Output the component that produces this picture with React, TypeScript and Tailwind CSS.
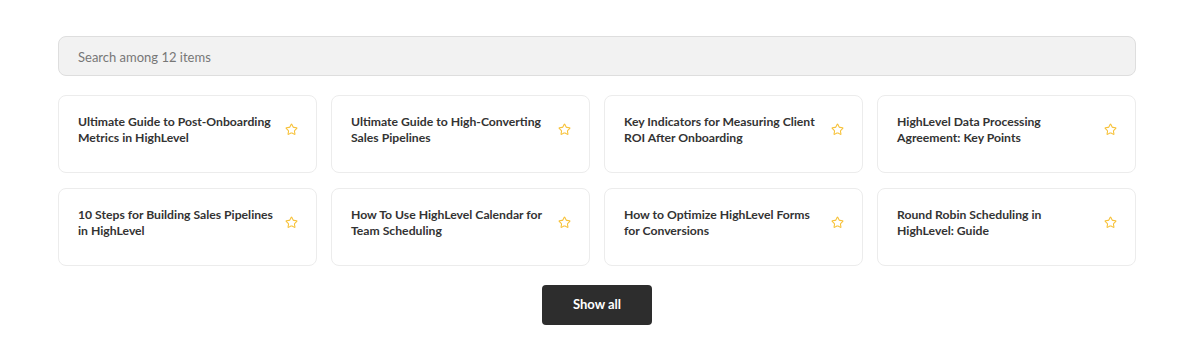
import { Star } from "lucide-react";

const items = [
  "Ultimate Guide to Post-Onboarding Metrics in HighLevel",
  "Ultimate Guide to High-Converting Sales Pipelines",
  "Key Indicators for Measuring Client ROI After Onboarding",
  "HighLevel Data Processing Agreement: Key Points",
  "10 Steps for Building Sales Pipelines in HighLevel",
  "How To Use HighLevel Calendar for Team Scheduling",
  "How to Optimize HighLevel Forms for Conversions",
  "Round Robin Scheduling in HighLevel: Guide",
];

export default function App() {
  return (
    <div className="w-[1200px] h-[358px] bg-white font-['Lato',sans-serif] pt-[36px]">
      <div className="w-[1078px] ml-[58px]">
        <div className="h-[40px] rounded-lg border border-[#dedede] bg-[#f2f2f2] flex items-center px-[19px] pt-[3px] text-[13px] text-[#777777]">
          Search among 12 items
        </div>
        <div className="grid grid-cols-4 gap-x-[14px] gap-y-[15px] mt-[19px]">
          {items.map((title) => (
            <div
              key={title}
              className="h-[78px] rounded-lg border border-[#ececec] bg-white flex items-center pl-[19px] pr-[18px] pt-[18px] pb-[27px] gap-[10px]"
            >
              <p className="flex-1 text-[12.2px] leading-[16px] font-bold text-[#333333]">
                {title}
              </p>
              <Star className="w-[13px] h-[13px] text-[#f7c23a] shrink-0" strokeWidth={2} />
            </div>
          ))}
        </div>
        <div className="flex justify-center mt-[19px]">
          <button className="w-[110px] h-[40px] rounded bg-[#2d2d2d] text-white text-[13px] font-bold">
            Show all
          </button>
        </div>
      </div>
    </div>
  );
}
